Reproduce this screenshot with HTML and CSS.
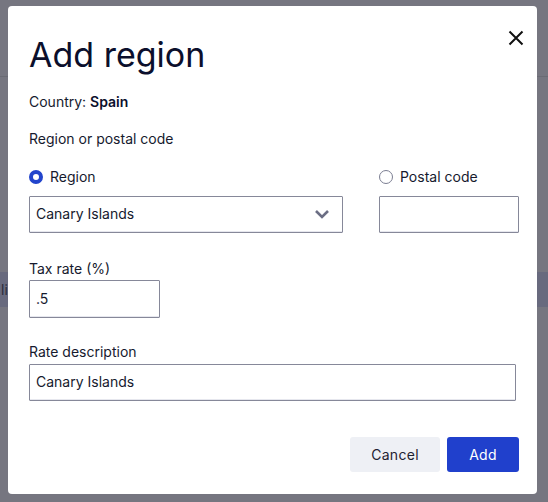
FILE: index.html
```html
<!DOCTYPE html>
<html lang="en">
<head>
<meta charset="utf-8">
<title>Add region</title>
<link rel="stylesheet" href="styles.css">
</head>
<body>
<div class="page">
  <div class="page-header"></div>
  <div class="page-row"><span class="row-text">li</span></div>
</div>
<div class="overlay">
  <div class="modal" role="dialog" aria-labelledby="title">
    <div class="modal-head">
      <h1 id="title" class="title">Add region</h1>
      <button class="close" aria-label="Close">
        <svg width="16" height="16" viewBox="0 0 16 16"><path d="M1.5 1.5 L14.5 14.5 M14.5 1.5 L1.5 14.5" stroke="#111" stroke-width="2" fill="none"/></svg>
      </button>
    </div>
    <p class="country">Country: <strong>Spain</strong></p>
    <p class="label section-label">Region or postal code</p>
    <div class="choice-row">
      <div class="choice choice-region">
        <label class="radio"><span class="dot checked"></span>Region</label>
        <div class="select">
          <span>Canary Islands</span>
          <svg width="16" height="10" viewBox="0 0 16 10"><path d="M2 2 L8 8 L14 2" stroke="#6b6e84" stroke-width="2.6" fill="none"/></svg>
        </div>
      </div>
      <div class="choice choice-postal">
        <label class="radio"><span class="dot"></span>Postal code</label>
        <div class="input postal"></div>
      </div>
    </div>
    <p class="label tax-label">Tax rate (%)</p>
    <div class="input tax">.5</div>
    <p class="label desc-label">Rate description</p>
    <div class="input desc">Canary Islands</div>
    <div class="actions">
      <button class="btn btn-cancel">Cancel</button>
      <button class="btn btn-add">Add</button>
    </div>
  </div>
</div>
</body>
</html>
```
FILE: styles.css
```css
* { box-sizing: border-box; }
html, body { margin: 0; padding: 0; }
body {
  width: 548px;
  height: 502px;
  background: #767680;
  font-family: "Inter", "Noto Sans", sans-serif;
  color: #141833;
  overflow: hidden;
  position: relative;
}
.page { height: 502px; }
.page-header { height: 77px; border-bottom: 1px solid #6a6b74; }
.page-row {
  margin-top: 195px;
  height: 35px;
  background: #686a7e;
  display: flex;
  align-items: center;
  font-size: 14px;
  color: #2a2c3a;
}
.row-text { padding-left: 1px; }
.overlay {
  position: absolute;
  inset: 0;
}
.modal {
  position: absolute;
  left: 8px;
  top: 6px;
  width: 529px;
  height: 488px;
  background: #fff;
  border-radius: 4px;
  padding: 0 18px 0 21px;
  display: flex;
  flex-direction: column;
}
.modal-head {
  display: flex;
  justify-content: space-between;
  align-items: flex-start;
  height: 85px;
}
.title {
  margin: 29px 0 0 0;
  font-size: 34px;
  font-weight: 400;
  line-height: 40px;
  color: #0b0f2c;
  letter-spacing: 0;
}
.close {
  margin: 24px -5px 0 0;
  padding: 0;
  border: 0;
  background: none;
  width: 16px;
  height: 16px;
}
.close svg { display: block; }
p { margin: 0; }
.country, .label {
  font-size: 14px;
  line-height: 20px;
  color: #161a2e;
}
.country { margin-top: 1px; }
.country strong { font-weight: 600; color: #0b0f2c; }
.section-label { margin-top: 17px; }
.choice-row {
  display: flex;
  gap: 36px;
  margin-top: 18px;
}
.choice { display: flex; flex-direction: column; gap: 9px; }
.choice-region { width: 314px; }
.choice-postal { width: 140px; }
.radio {
  display: flex;
  align-items: center;
  gap: 7px;
  font-size: 14px;
  line-height: 20px;
  color: #161a2e;
}
.dot {
  width: 14px;
  height: 14px;
  border-radius: 50%;
  border: 1px solid #7b7e92;
  background: #fff;
  flex: none;
}
.dot.checked {
  border: 4.5px solid #2244cc;
}
.select, .input {
  height: 37px;
  border: 1px solid #868899;
  border-radius: 1px;
  font-size: 14px;
  color: #161a2e;
  display: flex;
  align-items: center;
  padding: 0 6px 2px;
  background: #fff;
  box-shadow: inset 0 -1px 0 #e6e7ee;
}
.select { justify-content: space-between; padding-right: 12px; }
.postal { width: 140px; }
.tax-label { margin-top: 26px; }
.tax { width: 131px; height: 38px; margin-top: 1px; }
.desc-label { margin-top: 24px; }
.desc { width: 487px; margin-top: 2px; height: 37px; }
.actions {
  display: flex;
  justify-content: flex-end;
  gap: 7px;
  margin-top: 36px;
}
.btn {
  height: 35px;
  border: 0;
  border-radius: 3px;
  font-family: inherit;
  font-size: 14px;
  padding: 0;
  letter-spacing: 0.3px;
}
.btn-cancel { width: 90px; background: #eef0f5; color: #1e2232; }
.btn-add { width: 72px; background: #2040cc; color: #fff; }
```
